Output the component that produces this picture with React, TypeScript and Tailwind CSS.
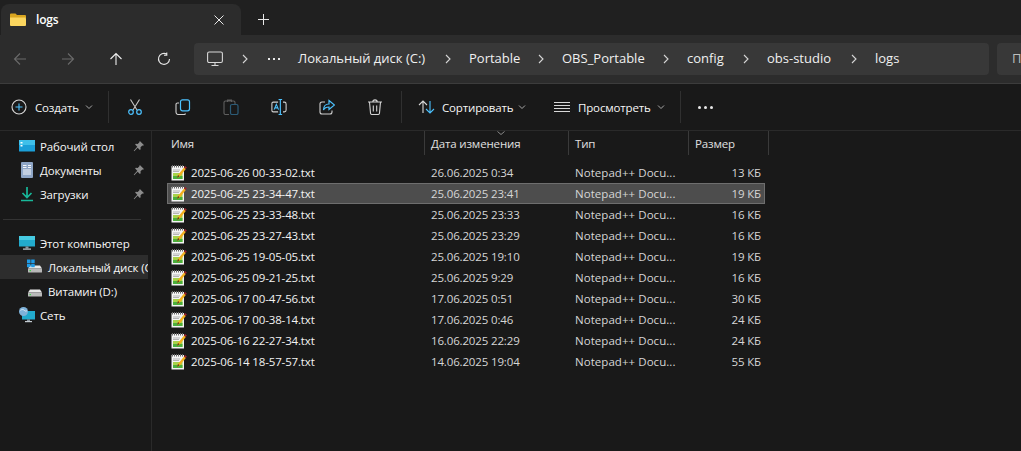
import { ReactNode } from 'react'

const files = [
  ['2025-06-26 00-33-02.txt', '26.06.2025 0:34', '13 КБ'],
  ['2025-06-25 23-34-47.txt', '25.06.2025 23:41', '19 КБ'],
  ['2025-06-25 23-33-48.txt', '25.06.2025 23:33', '16 КБ'],
  ['2025-06-25 23-27-43.txt', '25.06.2025 23:29', '16 КБ'],
  ['2025-06-25 19-05-05.txt', '25.06.2025 19:10', '19 КБ'],
  ['2025-06-25 09-21-25.txt', '25.06.2025 9:29', '16 КБ'],
  ['2025-06-17 00-47-56.txt', '17.06.2025 0:51', '30 КБ'],
  ['2025-06-17 00-38-14.txt', '17.06.2025 0:46', '24 КБ'],
  ['2025-06-16 22-27-34.txt', '16.06.2025 22:29', '24 КБ'],
  ['2025-06-14 18-57-57.txt', '14.06.2025 19:04', '55 КБ'],
]

const crumbs = [
  ['Локальный диск (C:)', 'w-[171px]'],
  ['Portable', 'w-[93px]'],
  ['OBS_Portable', 'w-[125px]'],
  ['config', 'w-[80px]'],
  ['obs-studio', 'w-[108px]'],
]

function Svg({ size = 16, children }: { size?: number; children: ReactNode }) {
  return (
    <svg width={size} height={size} viewBox="0 0 16 16" fill="none" className="shrink-0">
      {children}
    </svg>
  )
}

function Chevron() {
  return (
    <svg width="8" height="10" viewBox="0 0 8 10" fill="none" className="shrink-0">
      <path d="M2 1l4 4-4 4" stroke="#d6d6d6" strokeWidth="1.1" />
    </svg>
  )
}

function Down() {
  return (
    <svg width="8" height="6" viewBox="0 0 8 6" fill="none" className="shrink-0">
      <path d="M1 1.5l3 3 3-3" stroke="#a8a8a8" strokeWidth="1" />
    </svg>
  )
}

function Arrow({ rotate, color }: { rotate: string; color: string }) {
  return (
    <div className={rotate}>
      <Svg>
        <path d="M8 2.5V14M2.500 8 8 2.500 13.500 8" stroke={color} strokeWidth="1.1" />
      </Svg>
    </div>
  )
}

function FolderIcon() {
  return (
    <Svg>
      <path d="M0 2.500a1 1 0 0 1 1-1h4.500L7 3h8a1 1 0 0 1 1 1v2H0z" fill="#d9a520" />
      <path d="M0 5.500h15a1 1 0 0 1 1 1V13a1 1 0 0 1-1 1H1a1 1 0 0 1-1-1z" fill="#fbd65f" />
    </Svg>
  )
}

function NotepadIcon() {
  return (
    <Svg>
      <rect x=".5" y="1" width="12.500" height="14.500" fill="#f4f4f4" />
      <path d="M1.500 0v2.500M3.500 0v2.500M5.500 0v2.500M7.500 0v2.500M9.500 0v2.500M11.500 0v2.500" stroke="#6b6b6b" />
      <rect x="2" y="8" width="9.500" height="6" fill="#a8d24a" />
      <rect x="2" y="11" width="9.500" height="3" fill="#4caf3c" />
      <path d="M2 5h7M2 6.500h6" stroke="#b5b5b5" />
      <path d="M6 13l1-3 6-7.500 1.800 1.400-6 7.500z" fill="#f2b01e" />
      <path d="M13 2.500l1-1.500 1.800 1.400-1 1.500z" fill="#a3222a" />
      <path d="M6 13l1-3 1.500 1.200z" fill="#5b3a1a" />
    </Svg>
  )
}

function Desktop() {
  return (
    <Svg>
      <rect y="2" width="16" height="11.500" rx=".5" fill="#1b9fd8" />
      <rect y="2" width="16" height="5" fill="#3fc0ea" />
      <rect x="1.500" y="4" width="2" height="1.500" fill="#fff" />
      <rect x="1.500" y="7" width="2" height="1.500" fill="#fff" />
    </Svg>
  )
}

function Documents() {
  return (
    <Svg>
      <rect x="2" width="12" height="16" rx="1" fill="#8fa6c6" />
      <path d="M4 3.500h3.500M4 5.500h3.500M9 3.500h3M9 5.500h3M4 8h8M4 10h8M4 12h8" stroke="#f4f6f9" />
    </Svg>
  )
}

function Downloads() {
  return (
    <Svg>
      <path d="M8 1v10M3.500 7 8 11.500 12.500 7" stroke="#18b89a" strokeWidth="1.700" />
      <path d="M2 14.500h12" stroke="#18b89a" strokeWidth="1.500" />
    </Svg>
  )
}

function Computer() {
  return (
    <Svg>
      <rect y="1" width="16" height="10.500" fill="#22aacc" />
      <rect y="1" width="16" height="4" fill="#46cbe2" />
      <rect x="6.500" y="11.500" width="3" height="2" fill="#8a96a0" />
      <rect x="4" y="13.500" width="8" height="1.200" fill="#c4ccd2" />
    </Svg>
  )
}

function Drive({ windows }: { windows?: boolean }) {
  return (
    <Svg>
      <path d="M3 6.500h10l2 3H1z" fill="#e8e8e8" />
      <rect x="1" y="9.500" width="14" height="4" rx=".5" fill="#b9b9b9" />
      <rect x="2.500" y="11" width="1.500" height="1.200" fill="#3fd04a" />
      {windows && (
        <>
          <rect y=".5" width="3.500" height="3.500" fill="#1f9be6" />
          <rect x="4.200" y=".5" width="3.500" height="3.500" fill="#1f9be6" />
          <rect y="4.700" width="3.500" height="3.500" fill="#1f9be6" />
          <rect x="4.200" y="4.700" width="3.500" height="3.500" fill="#1f9be6" />
        </>
      )}
    </Svg>
  )
}

function Network() {
  return (
    <Svg>
      <rect x="3" y="4" width="13" height="8.500" fill="#22aacc" />
      <rect x="8" y="12.500" width="3" height="1.500" fill="#8a96a0" />
      <rect x="6" y="14" width="7" height="1.200" fill="#c4ccd2" />
      <circle cx="4.500" cy="4.500" r="4.500" fill="#7fb2d9" />
      <path d="M1.500 3.500c1.500-1.500 3-1 4 0s2 .5 2.500 0" stroke="#dcebf5" />
    </Svg>
  )
}

function Pin() {
  return (
    <Svg size={12}>
      <path d="M9.500 1.500l5 5-1 1-1-.3-2.500 2.500.2 2.500-1 1-3-3-4.500 4.700-.7-.7L5.700 9 2.800 6l1-1 2.500.2 2.500-2.500-.3-1.200z" fill="#8c8c8c" />
    </Svg>
  )
}

function Scissors() {
  return (
    <Svg>
      <path d="M3.500 .5l6.500 10.500M12.500 .5 6 11" stroke="#c8c8c8" strokeWidth="1.100" />
      <circle cx="4" cy="13" r="2.300" stroke="#4cc2ff" strokeWidth="1.200" />
      <circle cx="12" cy="13" r="2.300" stroke="#4cc2ff" strokeWidth="1.200" />
    </Svg>
  )
}

function Copy() {
  return (
    <Svg>
      <path d="M4 4H2.500A1.500 1.500 0 0 0 1 5.500V13a2.500 2.500 0 0 0 2.500 2.500H9a1.500 1.500 0 0 0 1.500-1" stroke="#d0d0d0" strokeWidth="1.100" />
      <rect x="5.500" y=".8" width="9" height="11" rx="2" stroke="#4cc2ff" strokeWidth="1.200" />
    </Svg>
  )
}

function Paste() {
  return (
    <Svg>
      <path d="M6 15.500H2.500A1.500 1.500 0 0 1 1 14V3.500A1.500 1.500 0 0 1 2.500 2h8A1.500 1.500 0 0 1 12 3.500V5M4.500 3V1h4v2" stroke="#5f5f5f" strokeWidth="1.100" />
      <rect x="7.500" y="5.500" width="7.500" height="10" rx="1.500" stroke="#2c5c78" strokeWidth="1.200" />
    </Svg>
  )
}

function Rename() {
  return (
    <svg width="16" height="16" viewBox="0 0 18 18" fill="none" className="shrink-0">
      <path d="M8 3.500H2.500A1.500 1.500 0 0 0 1 5v8a1.500 1.500 0 0 0 1.500 1.500H8M13.500 3.500H15A2 2 0 0 1 17 5.500v7a2 2 0 0 1-2 2h-1.500" stroke="#d0d0d0" strokeWidth="1.200" />
      <path d="M8.500 .5h4M8.500 17.500h4M10.500 .5v17" stroke="#4cc2ff" strokeWidth="1.300" />
      <path d="M3.500 12 6 6l2.500 6M4.500 10h3" stroke="#4cc2ff" strokeWidth="1.200" />
    </svg>
  )
}

function Share() {
  return (
    <Svg>
      <path d="M6 3H3a2 2 0 0 0-2 2v8a2 2 0 0 0 2 2h8a2 2 0 0 0 2-2v-1.500" stroke="#d0d0d0" strokeWidth="1.100" />
      <path d="M10 1.500l5.500 4.500-5.500 4.500V8C7.500 8 5.500 9 4.500 11c0-3.500 2-6 5.500-6z" stroke="#4cc2ff" strokeWidth="1.200" />
    </Svg>
  )
}

function Trash() {
  return (
    <Svg>
      <path d="M1 3h14M5.800 3c0-2.800 4.400-2.800 4.400 0M2.500 3l1 11a1.500 1.500 0 0 0 1.500 1.500h6a1.500 1.500 0 0 0 1.500-1.500l1-11M6.300 6.500v6M9.700 6.500v6" stroke="#d4d4d4" strokeWidth="1.100" />
    </Svg>
  )
}

function ToolDivider() {
  return <div className="h-8 w-px shrink-0 bg-[#303030]" />
}

function ToolIcon({ children }: { children: ReactNode }) {
  return <div className="flex w-12 shrink-0 justify-center">{children}</div>
}

function NavItem({ icon, label, indent, active, pin }: { icon: ReactNode; label: string; indent?: boolean; active?: boolean; pin?: boolean }) {
  return (
    <div className={`flex h-6 items-center overflow-hidden whitespace-nowrap ${indent ? 'pl-[27px]' : 'pl-[19px]'} ${active ? 'bg-[#2d2d2d]' : ''}`}>
      {icon}
      <span className="ml-[5px] flex-1 pt-px text-[#f6f6f6]">{label}</span>
      {pin && <div className="mr-[3px]"><Pin /></div>}
    </div>
  )
}

export default function App() {
  return (
    <div className="flex h-[451px] w-[1021px] flex-col overflow-hidden bg-[#191919] text-[11.5px] tracking-[-0.15px] text-[#e4e4e4] [font-family:'Open_Sans','Noto_Sans',sans-serif]">
      <div className="flex h-[35px] shrink-0 items-end bg-[#202020] pl-px">
        <div className="flex h-[31px] w-[240px] items-center rounded-t-lg bg-[#2c2c2c] pl-[9px]">
          <FolderIcon />
          <span className="ml-[10px] flex-1 text-xs font-semibold text-white">logs</span>
          <svg width="10" height="10" viewBox="0 0 10 10" className="mr-[17px]">
            <path d="M.5 .5l9 9M9.500 .5l-9 9" stroke="#e8e8e8" strokeWidth="1" />
          </svg>
        </div>
        <div className="flex h-[31px] w-[45px] items-center justify-center">
          <svg width="11" height="11" viewBox="0 0 11 11">
            <path d="M5.500 0v11M0 5.500h11" stroke="#e8e8e8" strokeWidth="1" />
          </svg>
        </div>
      </div>

      <div className="flex h-[49px] shrink-0 items-center border-b border-[#3c3c3c] bg-[#2c2c2c] pb-px">
        <div className="flex w-[194px] shrink-0 items-center">
          <div className="flex w-[40px] justify-center"><Arrow rotate="-rotate-90" color="#6a6a6a" /></div>
          <div className="ml-[6px] flex w-[44px] justify-center"><Arrow rotate="rotate-90" color="#6a6a6a" /></div>
          <div className="ml-[2px] flex w-[47px] justify-center"><Arrow rotate="" color="#efefef" /></div>
          <div className="flex w-[50px] justify-center">
            <svg width="14" height="14" viewBox="0 0 14 14" fill="none">
              <path d="M12.500 7A5.500 5.500 0 1 1 9.500 2M9.800 .5v2.800H7" stroke="#e8e8e8" strokeWidth="1.100" />
            </svg>
          </div>
        </div>
        <div className="flex h-8 w-[795px] shrink-0 items-center rounded bg-[#383838] text-[13px] tracking-normal text-[#f0f0f0]">
          <div className="ml-[13px] w-[34px]">
            <svg width="16" height="16" viewBox="0 0 16 16" fill="none">
              <rect x=".6" y="1" width="14.800" height="10.500" rx="1.500" stroke="#d8d8d8" strokeWidth="1.100" />
              <path d="M8 11.500v3M4.500 14.500h7" stroke="#d8d8d8" strokeWidth="1.100" />
            </svg>
          </div>
          <Chevron />
          <div className="ml-[19px] flex w-[30px] gap-[3px]">
            <span className="h-[2px] w-[2px] bg-[#e8e8e8]" />
            <span className="h-[2px] w-[2px] bg-[#e8e8e8]" />
            <span className="h-[2px] w-[2px] bg-[#e8e8e8]" />
          </div>
          {crumbs.map(([name, width]) => (
            <div key={name} className={`flex shrink-0 items-center justify-between pr-[17px] ${width}`}>
              <span className="whitespace-nowrap">{name}</span>
              <Chevron />
            </div>
          ))}
          <span>logs</span>
        </div>
        <div className="ml-2 flex h-8 flex-1 items-center rounded-l bg-[#383838] pl-[15px] text-[13px] text-[#bdbdbd]">П</div>
      </div>

      <div className="flex h-[47px] shrink-0 items-center border-b border-[#2a2a2a] pl-[11px]">
        <svg width="16" height="16" viewBox="0 0 16 16" fill="none" className="shrink-0">
          <circle cx="8" cy="8" r="7" stroke="#d8d8d8" strokeWidth="1.100" />
          <path d="M8 4.500v7M4.500 8h7" stroke="#4cc2ff" strokeWidth="1.100" />
        </svg>
        <span className="ml-2 w-[50px] whitespace-nowrap pt-[2px] text-[#f6f6f6]">Создать</span>
        <div className="w-[23px]"><Down /></div>
        <ToolDivider />
        <div className="w-[2px]" />
        <ToolIcon><Scissors /></ToolIcon>
        <ToolIcon><Copy /></ToolIcon>
        <ToolIcon><Paste /></ToolIcon>
        <ToolIcon><Rename /></ToolIcon>
        <ToolIcon><Share /></ToolIcon>
        <ToolIcon><Trash /></ToolIcon>
        <div className="w-[2px]" />
        <ToolDivider />
        <div className="ml-[16px] flex w-[24px] shrink-0">
          <svg width="17" height="14" viewBox="0 0 17 14" fill="none">
            <path d="M5 13V1M1 5l4-4 4 4" stroke="#d8d8d8" strokeWidth="1.100" />
            <path d="M12 1v12M8 9l4 4 4-4" stroke="#4cc2ff" strokeWidth="1.100" />
          </svg>
        </div>
        <span className="w-[76px] whitespace-nowrap pt-[2px] text-[#f6f6f6]">Сортировать</span>
        <div className="w-[36px]"><Down /></div>
        <svg width="16" height="11" viewBox="0 0 16 11" fill="none" className="shrink-0">
          <path d="M0 .5h16M0 3.500h16M0 6.500h16M0 9.500h16" stroke="#d8d8d8" strokeWidth="1" />
        </svg>
        <span className="ml-[8px] w-[79px] whitespace-nowrap pt-[2px] text-[#f6f6f6]">Просмотреть</span>
        <div className="w-[23px]"><Down /></div>
        <ToolDivider />
        <div className="ml-[17px] flex gap-[3px]">
          <span className="h-[3px] w-[3px] rounded-full bg-[#e8e8e8]" />
          <span className="h-[3px] w-[3px] rounded-full bg-[#e8e8e8]" />
          <span className="h-[3px] w-[3px] rounded-full bg-[#e8e8e8]" />
        </div>
      </div>

      <div className="flex min-h-0 flex-1">
        <div className="w-[152px] shrink-0 border-r border-[#2a2a2a] pt-[3px]">
          <div className="w-[148px]">
            <NavItem icon={<Desktop />} label="Рабочий стол" pin />
            <NavItem icon={<Documents />} label="Документы" pin />
            <NavItem icon={<Downloads />} label="Загрузки" pin />
            <div className="mx-[3px] mt-[13px] mb-[11px] h-px w-[138px] bg-[#333333]" />
            <NavItem icon={<Computer />} label="Этот компьютер" />
            <NavItem icon={<Drive windows />} label="Локальный диск (C:)" indent active />
            <NavItem icon={<Drive />} label="Витамин (D:)" indent />
            <NavItem icon={<Network />} label="Сеть" />
          </div>
        </div>

        <div className="flex-1 pl-[15px]">
          <div className="relative flex h-6 items-center text-[#e0e0e0]">
            <div className="absolute left-[330px] top-0">
              <svg width="8" height="4" viewBox="0 0 8 4" fill="none">
                <path d="M.5 .5 4 3.500 7.500 .5" stroke="#8a8a8a" />
              </svg>
            </div>
            <div className="flex h-full w-[258px] items-center border-r border-[#3a3a3a] pl-1 pt-px">Имя</div>
            <div className="flex h-full w-[144px] items-center border-r border-[#3a3a3a] pl-[6px] pt-px">Дата изменения</div>
            <div className="flex h-full w-[120px] items-center border-r border-[#3a3a3a] pl-[6px] pt-px">Тип</div>
            <div className="flex h-full w-[80px] items-center border-r border-[#3a3a3a] pl-[6px] pt-px">Размер</div>
          </div>
          <div className="mt-[7px] w-[598px]">
            {files.map(([name, date, size], i) => (
              <div key={name} className={`flex h-[21px] items-center whitespace-nowrap border ${i === 1 ? 'border-[#6e6e6e] bg-[#4d4d4d]' : 'border-transparent'}`}>
                <div className="ml-[3px] w-[20px]"><NotepadIcon /></div>
                <span className="w-[240px] text-[#f2f2f2]">{name}</span>
                <span className="w-[144px] text-[#d6d6d6]">{date}</span>
                <span className="w-[128px] tracking-[0.05px] text-[#d6d6d6]">Notepad++ Docu...</span>
                <span className="flex-1 pr-[3px] text-right text-[#d6d6d6]">{size}</span>
              </div>
            ))}
          </div>
        </div>
      </div>
    </div>
  )
}
